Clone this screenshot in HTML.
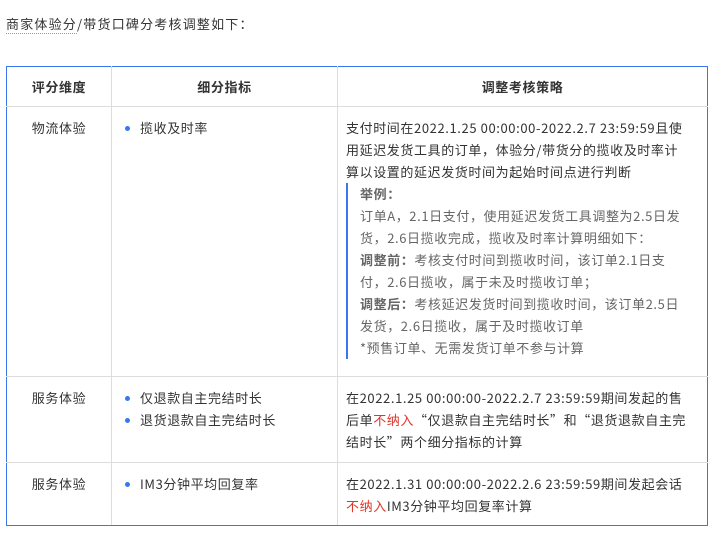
<!DOCTYPE html>
<html><head><meta charset="utf-8"><style>
*{margin:0;padding:0;box-sizing:border-box}
body{width:720px;height:540px;background:#fff;font-family:"Noto Sans CJK SC","Liberation Sans",sans-serif;font-size:13px;color:#333;position:relative;overflow:hidden;letter-spacing:0.6px}
.title{position:absolute;left:6px;top:13px;line-height:22px;letter-spacing:1.2px}
.title u{text-decoration:none;border-bottom:1px dotted #999}
table{position:absolute;left:6px;top:66px;width:702px;border-collapse:collapse;border:1px solid #3a76f0;table-layout:fixed}
td,th{border:1px solid #ddd;vertical-align:top;line-height:22px}
th{height:40px;vertical-align:middle;font-weight:bold;text-align:center;border-top:1px solid #3a76f0}
tr>*:first-child{border-left:1px solid #3a76f0}
tr>*:last-child{border-right:1px solid #3a76f0}
tr:last-child td{border-bottom:1px solid #3a76f0}
td{padding:10px 8px 8px 8px}
td.c1{text-align:center}
td.c2{padding-left:10px}
td.c3{padding-left:8px;padding-right:12px}
.li{position:relative;padding-left:18px}
.li:before{content:"";position:absolute;left:3px;top:9px;width:5px;height:5px;border-radius:50%;background:#3a76f0}
.bq{border-left:2px solid #3a76f0;margin-left:0;padding-left:12px;color:#666}
.red{color:#e0352b}
</style></head><body>
<div class="title"><u>商家体验分</u>/带货口碑分考核调整如下：</div>
<table>
<colgroup><col style="width:105px"><col style="width:226px"><col></colgroup>
<tr><th>评分维度</th><th>细分指标</th><th>调整考核策略</th></tr>
<tr style="height:270px"><td class="c1">物流体验</td><td class="c2"><div class="li">揽收及时率</div></td>
<td class="c3">支付时间在2022.1.25 00:00:00-2022.2.7 23:59:59且使用延迟发货工具的订单，体验分/带货分的揽收及时率计<br>算以设置的延迟发货时间为起始时间点进行判断
<div class="bq"><b>举例：</b><br>订单A，2.1日支付，使用延迟发货工具调整为2.5日发货，2.6日揽收完成，揽收及时率计算明细如下：<br><b>调整前：</b>考核支付时间到揽收时间，该订单2.1日支<br>付，2.6日揽收，属于未及时揽收订单；<br><b>调整后：</b>考核延迟发货时间到揽收时间，该订单2.5日<br>发货，2.6日揽收，属于及时揽收订单<br>*预售订单、无需发货订单不参与计算</div></td></tr>
<tr style="height:86px"><td class="c1">服务体验</td><td class="c2"><div class="li">仅退款自主完结时长</div><div class="li">退货退款自主完结时长</div></td>
<td class="c3">在2022.1.25 00:00:00-2022.2.7 23:59:59期间发起的售后单<span class="red">不纳入</span>“仅退款自主完结时长”和“退货退款自主完结时长”两个细分指标的计算</td></tr>
<tr style="height:63px"><td class="c1">服务体验</td><td class="c2"><div class="li">IM3分钟平均回复率</div></td>
<td class="c3">在2022.1.31 00:00:00-2022.2.6 23:59:59期间发起会话<span class="red">不纳入</span>IM3分钟平均回复率计算</td></tr>
</table>
</body></html>
